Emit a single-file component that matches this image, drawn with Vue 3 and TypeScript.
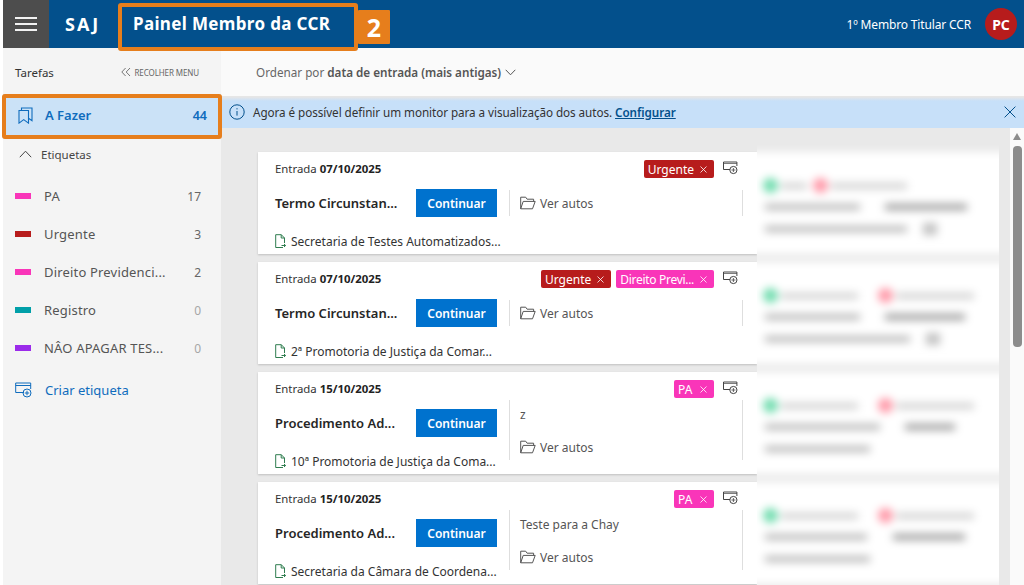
<script setup lang="ts">
interface Label { name: string; count: number; color: string }
interface Tag { name: string; color: string }
interface TaskCard { date: string; title: string; tags: Tag[]; note?: string; source: string; bars: number[] }

const pink = '#f935b9'
const red = '#b71c1c'

const labels: Label[] = [
  { name: 'PA', count: 17, color: pink },
  { name: 'Urgente', count: 3, color: red },
  { name: 'Direito Previdenci...', count: 2, color: pink },
  { name: 'Registro', count: 0, color: '#009fa8' },
  { name: 'NÂO APAGAR TES...', count: 0, color: '#9b2bea' },
]

const cards: TaskCard[] = [
  { date: '07/10/2025', title: 'Termo Circunstan...', tags: [{ name: 'Urgente', color: red }], source: 'Secretaria de Testes Automatizados...', bars: [95, 22, 82, 142] },
  { date: '07/10/2025', title: 'Termo Circunstan...', tags: [{ name: 'Urgente', color: red }, { name: 'Direito Previ...', color: pink }], source: '2ª Promotoria de Justiça da Comar...', bars: [95, 22, 80, 145] },
  { date: '15/10/2025', title: 'Procedimento Ad...', tags: [{ name: 'PA', color: pink }], note: 'z', source: '10ª Promotoria de Justiça da Coma...', bars: [115, 22, 50, 105] },
  { date: '15/10/2025', title: 'Procedimento Ad...', tags: [{ name: 'PA', color: pink }], note: 'Teste para a Chay', source: 'Secretaria da Câmara de Coordena...', bars: [102, 23, 72, 105] },
]
</script>

<template>
  <div class="app">
    <header class="topbar">
      <button class="burger" aria-label="Menu"><i></i><i></i><i></i></button>
      <span class="brand">SAJ</span>
      <h1 class="page-title">Painel Membro da CCR</h1>
      <span class="role">1º Membro Titular CCR</span>
      <span class="avatar">PC</span>
    </header>

    <div class="shell">
      <aside class="sidebar">
        <div class="side-head">
          <span class="side-title">Tarefas</span>
          <span class="collapse">
            <svg width="10" height="10" viewBox="0 0 10 10" fill="none" stroke="#666" stroke-width=".9"><path d="M4.6 1 .8 5l3.8 4M9 1 5.2 5 9 9" /></svg>
            RECOLHER MENU
          </span>
        </div>
        <div class="todo">
          <svg width="15" height="17" viewBox="0 0 15 17" fill="none" stroke="#0f6cbd" stroke-width="1.1"><path d="M1 3.5h9.5v12.6L5.7 12.6 1 16.1zM3.5 3.5V1H14v12.6l-3.5-2.4" /></svg>
          <span class="todo-name">A Fazer</span>
          <span class="todo-count">44</span>
        </div>
        <div class="labels-head">
          <svg width="13" height="8" viewBox="0 0 13 8" fill="none" stroke="#444" stroke-width="1"><path d="M.8 7.2 6.5 1.2l5.7 6" /></svg>
          <span>Etiquetas</span>
        </div>
        <ul class="label-list">
          <li v-for="l in labels" :key="l.name" class="label-row">
            <span class="swatch" :style="{ background: l.color }"></span>
            <span class="label-name">{{ l.name }}</span>
            <span class="label-count" :class="{ zero: l.count === 0 }">{{ l.count }}</span>
          </li>
        </ul>
        <div class="create">
          <svg width="17" height="16" viewBox="0 0 17 16" fill="none" stroke="#0f6cbd" stroke-width="1"><path d="M9 10.5H.7V1h15v6M.7 3.5h15" /><circle cx="12" cy="11" r="4" /><path d="M12 8.8v4.4M9.8 11h4.4" /></svg>
          <span>Criar etiqueta</span>
        </div>
      </aside>

      <main class="main">
        <div class="sortbar">
          <span>Ordenar por <b>data de entrada (mais antigas)</b></span>
          <svg width="11" height="7" viewBox="0 0 11 7" fill="none" stroke="#555" stroke-width="1"><path d="m.7.8 4.8 5 4.8-5" /></svg>
        </div>
        <div class="notice">
          <svg width="16" height="16" viewBox="0 0 16 16" fill="none" stroke="#03508c" stroke-width="1"><circle cx="8" cy="8" r="7.2" /><path d="M8 7v4.6M8 4.2v1.2" /></svg>
          <span class="notice-text">Agora é possível definir um monitor para a visualização dos autos. <a>Configurar</a></span>
          <svg class="notice-close" width="12" height="12" viewBox="0 0 12 12" stroke="#03508c" stroke-width="1"><path d="m.6.6 10.8 10.8M11.4.6.6 11.4" /></svg>
        </div>
        <div class="workspace">
          <div class="list">
            <article v-for="(c, i) in cards" :key="i" class="card">
              <div class="card-top">
                <span class="entry">Entrada <b>{{ c.date }}</b></span>
                <div class="tags">
                  <span v-for="t in c.tags" :key="t.name" class="tag" :class="{ long: t.name.length > 10 }" :style="{ background: t.color }">
                    {{ t.name }}
                    <svg width="7" height="7" viewBox="0 0 7 7" stroke="#fff" stroke-width=".8"><path d="m.5.5 6 6M6.5.5l-6 6" /></svg>
                  </span>
                  <svg class="add-tag" width="15" height="14" viewBox="0 0 15 14" fill="none" stroke="#444" stroke-width="1"><path d="M7 8.5H.5V1h13.4v4" /><path d="M.5 2.5h13.4" stroke-width=".7" /><circle cx="10.4" cy="9" r="3.6" /><path d="M10.4 7v4M8.4 9h4" stroke-width=".8" /></svg>
                </div>
              </div>
              <div class="card-left">
                <div class="title-row">
                  <span class="title">{{ c.title }}</span>
                  <button class="go">Continuar</button>
                </div>
                <div class="source">
                  <svg width="11" height="14" viewBox="0 0 11 14" fill="none" stroke="#2f7d4f" stroke-width="1"><path d="M8 13.5H.7V.7h5.6L9.5 4v5M6.2.7V4h3.3M6.5 11.5h4M9 10l1.6 1.5L9 13" /></svg>
                  <span>{{ c.source }}</span>
                </div>
              </div>
              <div class="card-mid" :class="{ 'with-note': c.note }">
                <span v-if="c.note" class="note">{{ c.note }}</span>
                <span class="autos">
                  <svg width="16" height="14" viewBox="0 0 16 14" fill="none" stroke="#555" stroke-width="1"><path d="M.7 12.8V1.2h5l1.4 2h6.5v2.2M.7 12.8h11.8l2.7-7.4H3.2L.7 12.8z" /></svg>
                  Ver autos
                </span>
              </div>
            </article>
          </div>
          <div class="masked" aria-hidden="true">
            <div class="masked-inner">
              <div v-for="(c, i) in cards" :key="i" class="ghost">
                <div class="ghost-row">
                  <i class="dot green"></i><i class="bar" :style="{ width: i === 0 ? '26px' : '77px' }"></i>
                  <i class="dot pinkish" :class="{ near: i === 0 }"></i><i class="bar" :style="{ width: i === 0 ? '76px' : '78px' }"></i>
                </div>
                <div class="ghost-row">
                  <i class="bar dark" :style="{ width: c.bars[0] + 'px' }"></i>
                  <i class="bar darker" :style="{ width: c.bars[2] + 'px', marginLeft: c.bars[1] + 'px' }"></i>
                </div>
                <div class="ghost-row">
                  <i class="bar dark" :style="{ width: c.bars[3] + 'px' }"></i>
                  <i v-if="i < 2" class="square"></i>
                </div>
              </div>
            </div>
          </div>
          <div class="scrollbar">
            <span class="arrow"></span>
            <span class="thumb"></span>
          </div>
        </div>
      </main>
    </div>

    <div class="hl hl-title"></div>
    <div class="hl-badge">2</div>
    <div class="hl hl-todo"></div>
  </div>
</template>

<style>
html, body { margin: 0; padding: 0; background: #fff; overflow: hidden; }
</style>

<style scoped>
.app { position: relative; width: 1024px; height: 585px; overflow: hidden; padding-left: 3px; box-sizing: border-box; font-family: "Noto Sans", "Open Sans", sans-serif; color: #333; font-size: 12px; }
.topbar { height: 48px; background: #03508c; display: flex; align-items: center; color: #fff; }
.burger { width: 46px; height: 48px; background: #4d4d4d; border: 0; padding: 0; display: flex; flex-direction: column; align-items: center; justify-content: center; gap: 4px; }
.burger i { display: block; width: 22px; height: 2px; background: #f2f2f2; }
.brand { margin-left: 16px; font-size: 18px; font-weight: 700; letter-spacing: 2px; width: 68px; }
.page-title { margin: 0; font-size: 17px; font-weight: 700; flex: 1; position: relative; top: -1px; letter-spacing: .35px; }
.role { font-size: 12px; margin-right: 14px; letter-spacing: -.15px; }
.avatar { width: 32px; height: 32px; border-radius: 50%; background: #b71c1c; color: #fff; font-weight: 700; font-size: 14px; display: flex; align-items: center; justify-content: center; margin-right: 7px; }
.shell { display: flex; height: 537px; }
.sidebar { width: 218px; flex: none; background: #f4f4f4; }
.side-head { height: 46px; display: flex; align-items: center; justify-content: space-between; padding: 2px 22px 0 12px; box-sizing: border-box; }
.side-title { font-size: 11.5px; color: #333; }
.collapse { font-size: 8px; color: #666; display: flex; align-items: center; gap: 3px; letter-spacing: -.1px; }
.todo { height: 44px; background: #cbe2f7; display: flex; align-items: center; padding: 0 14px 2px 15px; box-sizing: border-box; }
.todo-name { margin-left: 12px; flex: 1; font-size: 13px; font-weight: 600; color: #0f6cbd; }
.todo-count { font-size: 12.5px; font-weight: 600; color: #0f6cbd; }
.labels-head { display: flex; align-items: center; height: 34px; padding: 0 0 2px 16px; box-sizing: border-box; gap: 9px; font-size: 11.5px; color: #444; }
.label-list { list-style: none; margin: 5px 0 0; padding: 0; }
.label-row { height: 38px; display: flex; align-items: center; padding: 0 20px 0 12px; }
.swatch { width: 16px; height: 6px; flex: none; }
.label-name { margin-left: 13px; flex: 1; font-size: 13px; color: #555; letter-spacing: .18px; }
.label-count { font-size: 12px; color: #666; }
.label-count.zero { color: #a6a6a6; }
.create { display: flex; align-items: center; height: 30px; margin-top: 8px; padding-left: 12px; gap: 13px; color: #0f6cbd; font-size: 13px; }
.main { flex: 1; min-width: 0; display: flex; flex-direction: column; background: #e9e9e9; }
.sortbar { height: 48px; flex: none; background: #fafafa; display: flex; align-items: center; gap: 4px; padding: 0 0 0 35px; box-sizing: border-box; font-size: 11.7px; color: #666; }
.sortbar b { font-weight: 600; color: #555; }
.notice { height: 32px; flex: none; background: linear-gradient(#e6e6e6 0, #e6e6e6 1px, #c7e0f9 5px); display: flex; align-items: center; padding: 0 8px; box-sizing: border-box; gap: 8px; }
.notice-text { flex: 1; font-size: 11.7px; color: #333; letter-spacing: -.06px; }
.notice-text a { color: #03508c; font-weight: 600; text-decoration: underline; }
.workspace { position: relative; flex: 1; min-height: 0; display: flex; }
.list { width: 499px; margin-left: 37px; padding-top: 24px; display: flex; flex-direction: column; gap: 8px; }
.card { height: 102px; flex: none; background: #fff; box-shadow: 0 1px 2px rgba(0,0,0,.18); display: grid; grid-template-columns: 251px 234px; grid-template-rows: 28px 74px; box-sizing: border-box; }
.card-top { grid-column: 1 / 3; display: flex; justify-content: space-between; padding: 8px 0 0 17px; box-sizing: border-box; height: 28px; }
.entry { font-size: 11.4px; line-height: 18px; color: #333; }
.entry b { font-weight: 700; color: #222; }
.tags { display: flex; align-items: flex-start; gap: 5px; margin-right: 5px; }
.tag { height: 18px; min-width: 40px; border-radius: 2px; color: #fff; font-size: 12px; line-height: 18px; padding: 1px 7px 0 4px; box-sizing: border-box; display: flex; align-items: center; justify-content: space-between; gap: 6px; white-space: nowrap; }
.tag.long { letter-spacing: -.3px; }
.add-tag { margin: 0 0 0 4px; position: relative; top: 1px; }
.card-left { padding: 9px 12px 0 17px; }
.title-row { display: flex; align-items: center; justify-content: space-between; height: 28px; }
.title { font-size: 13px; font-weight: 600; color: #262626; }
.go { width: 81px; height: 28px; margin-right: 0; border: 0; background: #0072ce; color: #fff; font: 600 12px "Noto Sans", sans-serif; }
.source { display: flex; align-items: center; gap: 5px; height: 22px; margin-top: 13px; font-size: 12px; color: #333; white-space: nowrap; }
.source svg { flex: none; }
.card-mid { border-left: 1px solid #dedede; border-right: 1px solid #dedede; margin-top: 10px; height: 26px; padding-left: 10px; display: flex; flex-direction: column; justify-content: center; width: 234px; box-sizing: border-box; }
.card-mid.with-note { margin-top: 0; height: 60px; justify-content: flex-start; padding-top: 6px; }
.note { font-size: 12px; color: #555; height: 17px; line-height: 17px; }
.with-note .autos { margin-top: 15px; }
.autos { display: flex; align-items: center; gap: 4px; font-size: 12px; color: #555; height: 18px; }
.masked { position: absolute; left: 536px; top: 17px; width: 242px; bottom: 0; overflow: hidden; background: #e9e9e9; }
.masked-inner { position: absolute; left: -20px; right: -20px; top: 7px; display: flex; flex-direction: column; gap: 8px; filter: blur(4px); }
.ghost { height: 102px; background: #fff; padding: 23px 0 0 34px; box-sizing: border-box; }
.ghost-row { display: flex; align-items: center; height: 21.5px; gap: 3px; }
.dot { width: 15px; height: 15px; border-radius: 50%; margin-left: -8px; flex: none; }
.green { background: #70dcae; }
.pinkish { background: #ff98a8; margin-left: 17px; }
.pinkish.near { margin-left: 3px; }
.bar { display: block; height: 6px; background: #d0d0d0; }
.bar.dark { background: #b8b8b8; margin-left: -6px; }
.bar.darker { background: #9a9a9a; }
.square { width: 14px; height: 12px; background: #c2c2c2; margin-left: 13px; }
.scrollbar { position: absolute; right: 0; top: 0; bottom: 0; width: 14px; background: #fafafa; }
.arrow { position: absolute; left: 3px; top: 5px; width: 0; height: 0; border-left: 4.5px solid transparent; border-right: 4.5px solid transparent; border-bottom: 7px solid #8c8c8c; }
.thumb { position: absolute; left: 3px; top: 18px; width: 9px; height: 201px; border-radius: 4px; background: #8c8c8c; }
.hl { position: absolute; border: 4px solid #e67e1c; border-radius: 3px; box-sizing: border-box; pointer-events: none; }
.hl-title { left: 118px; top: 3px; width: 240px; height: 48px; }
.hl-todo { left: 2px; top: 94px; width: 220px; height: 45px; }
.hl-badge { position: absolute; left: 358px; top: 10px; width: 32px; height: 34px; border-radius: 1px; background: #e67e1c; color: #fff; font-weight: 700; font-size: 25px; line-height: 35px; text-align: center; }
</style>
